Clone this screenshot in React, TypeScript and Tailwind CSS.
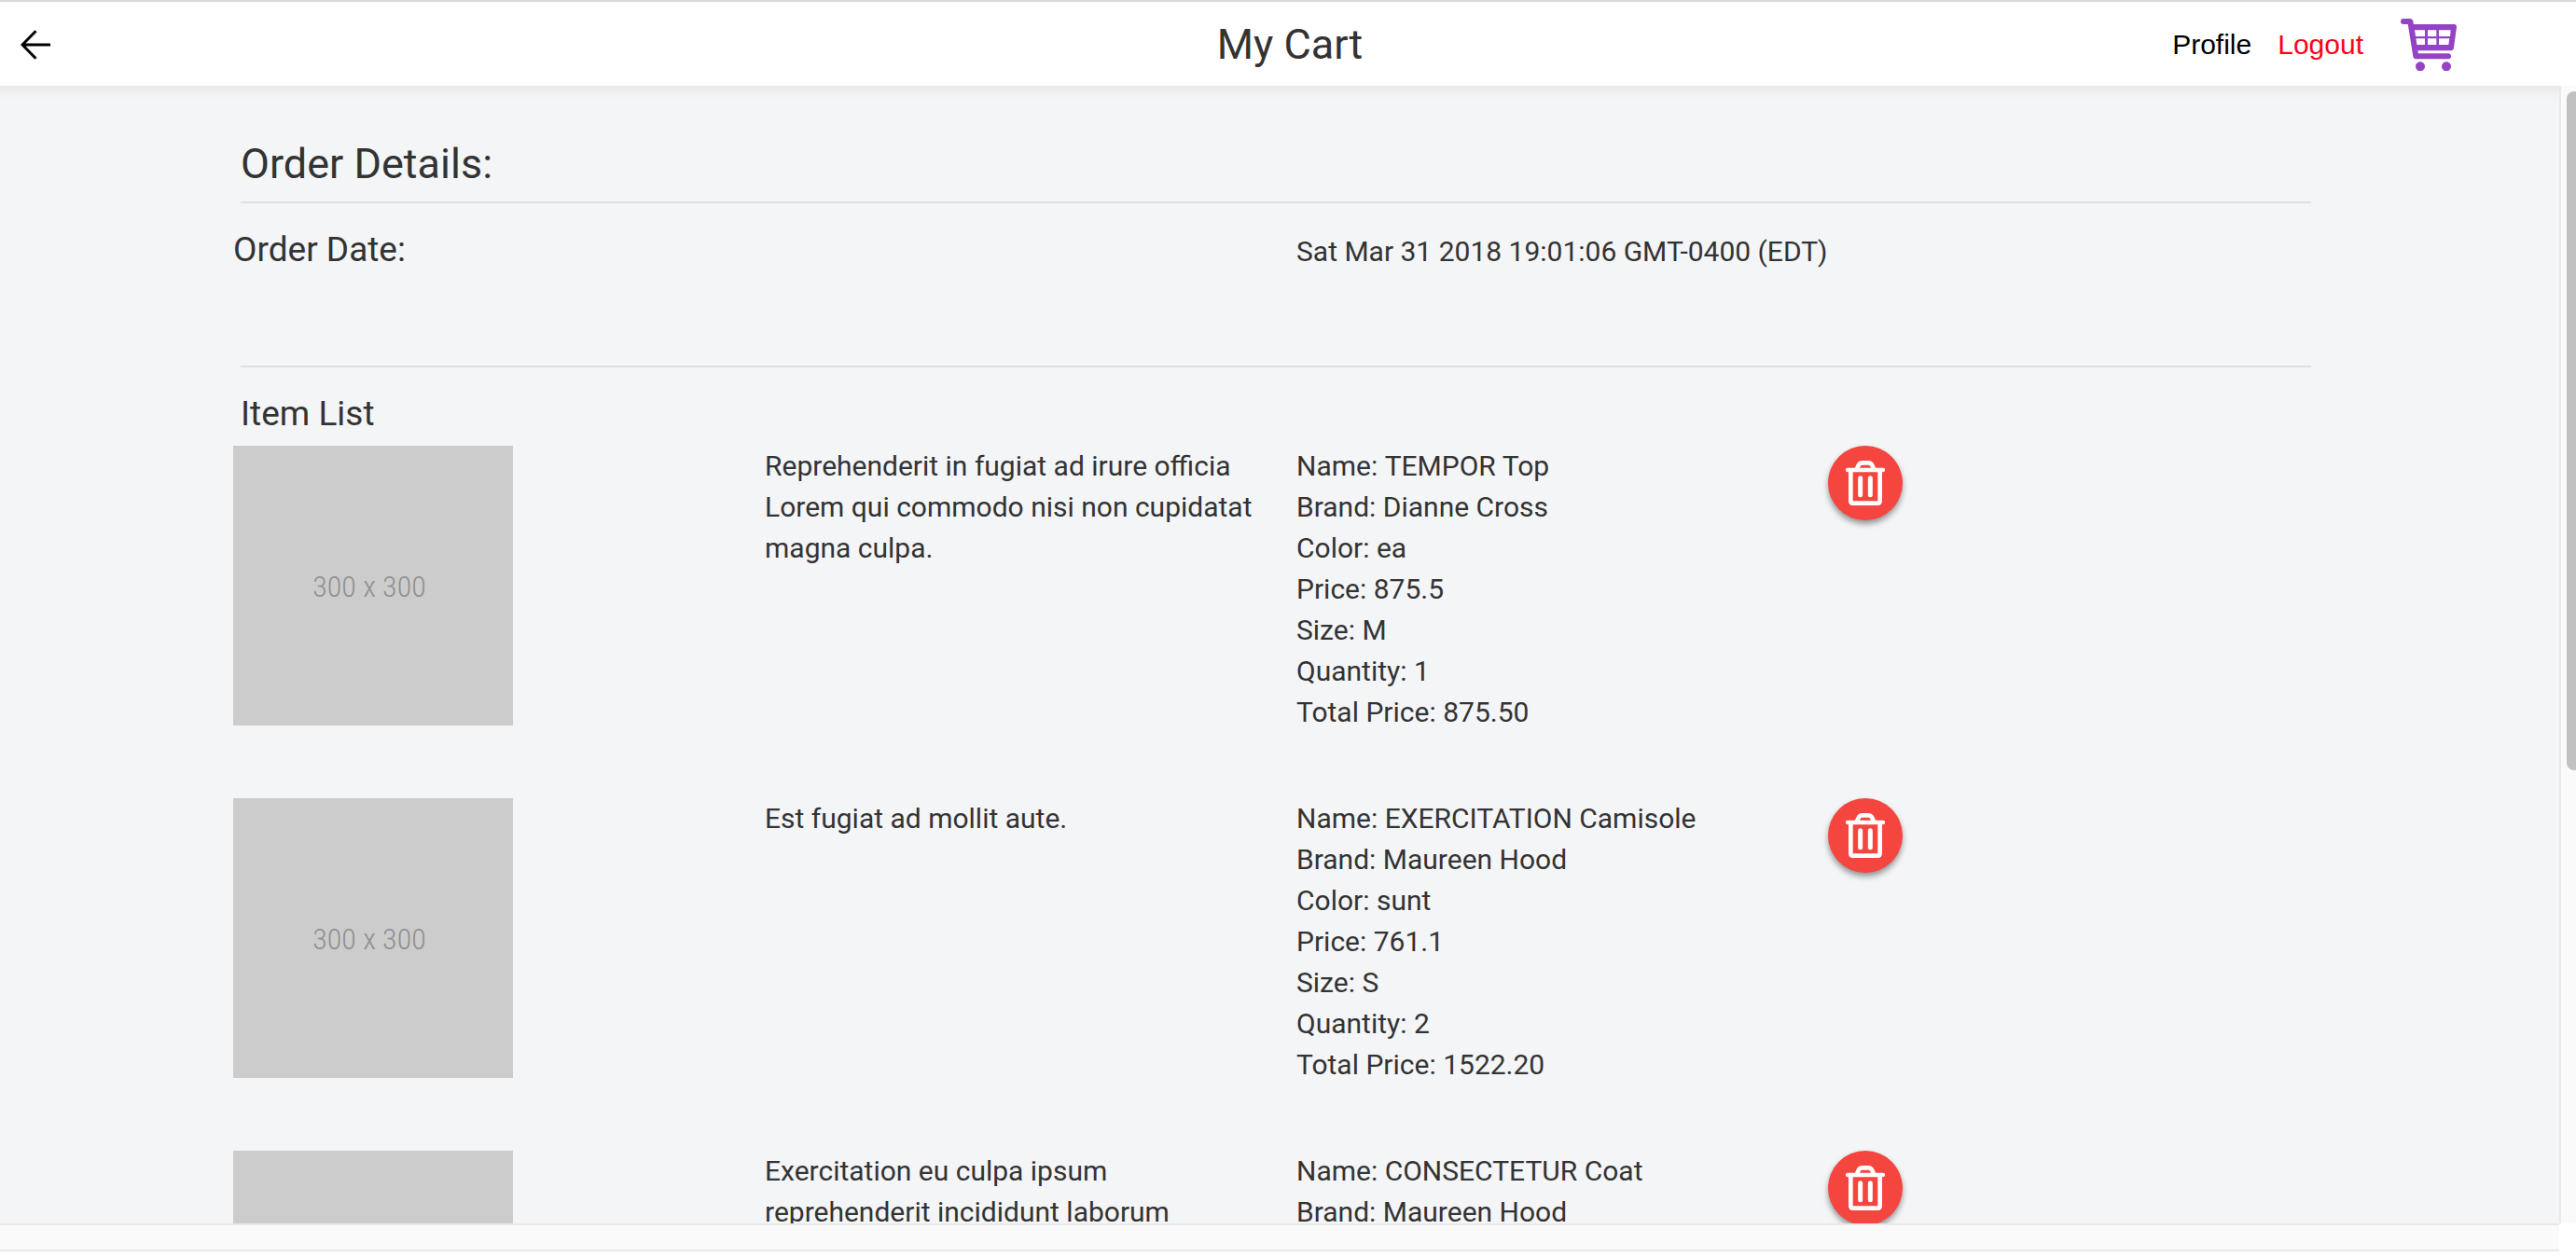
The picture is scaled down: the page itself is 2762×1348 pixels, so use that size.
import React from "react";

type Item = {
  description: string;
  details: [string, string][];
};

const items: Item[] = [
  {
    description:
      "Reprehenderit in fugiat ad irure officia Lorem qui commodo nisi non cupidatat magna culpa.",
    details: [
      ["Name", "TEMPOR Top"],
      ["Brand", "Dianne Cross"],
      ["Color", "ea"],
      ["Price", "875.5"],
      ["Size", "M"],
      ["Quantity", "1"],
      ["Total Price", "875.50"],
    ],
  },
  {
    description: "Est fugiat ad mollit aute.",
    details: [
      ["Name", "EXERCITATION Camisole"],
      ["Brand", "Maureen Hood"],
      ["Color", "sunt"],
      ["Price", "761.1"],
      ["Size", "S"],
      ["Quantity", "2"],
      ["Total Price", "1522.20"],
    ],
  },
  {
    description: "Exercitation eu culpa ipsum reprehenderit incididunt laborum",
    details: [
      ["Name", "CONSECTETUR Coat"],
      ["Brand", "Maureen Hood"],
    ],
  },
];

function BackArrow() {
  return (
    <svg viewBox="0 0 32 32" className="h-8 w-8" fill="none" stroke="black" strokeWidth="3">
      <path d="M16.5 1.2 2 16l14.5 14.8M2 16h30" />
    </svg>
  );
}

function CartIcon() {
  return (
    <svg viewBox="0 0 180 168" className="h-14 w-15">
      <g fill="none" stroke="#9443c4" strokeLinecap="round" strokeLinejoin="round" strokeWidth="18">
        <path d="M9 9h22l18 112h104" />
      </g>
      <path
        fill="#9443c4"
        fillRule="evenodd"
        d="M30 18h142q9 0 8 9l-9 67q-1 9-10 9H42zM45 37l2 20h31V37zM87 37v20h28V37zM123 37v20h36l2-20zM48 64l3 20h27V64zM87 64v20h28V64zM123 64v20h31l3-20z"
      />
      <circle cx="63" cy="154" r="15" fill="#9443c4" />
      <circle cx="147" cy="154" r="15" fill="#9443c4" />
    </svg>
  );
}

function TrashIcon() {
  return (
    <svg viewBox="0 0 128 144" className="h-12 w-11" fill="none" stroke="white" strokeLinecap="round" strokeLinejoin="round">
      <path strokeWidth="13" d="M7 30h114" />
      <path strokeWidth="14" d="M37 26l5-11q4-8 12-8h20q8 0 12 8l5 11" />
      <path strokeWidth="14" d="M17 32v98q0 7 7 7h80q7 0 7-7V32" />
      <path strokeWidth="15" d="M48 56v54M80 56v54" />
    </svg>
  );
}

function ItemRow({ item }: { item: Item }) {
  return (
    <li className="grid grid-cols-4 pb-[70px]">
      <div className="flex h-[300px] w-[300px] items-center justify-center bg-[#cccccc] pt-0.5 pr-2 font-['Liberation_Sans_Narrow','Roboto_Condensed',sans-serif] text-[32px] font-light text-[#8f8f8f]">
        300 x 300
      </div>
      <p className="pr-10">{item.description}</p>
      <dl>
        {item.details.map(([label, value]) => (
          <div key={label}>
            <dt className="inline">{label}:</dt> <dd className="inline">{value}</dd>
          </div>
        ))}
      </dl>
      <button
        type="button"
        aria-label="Remove item"
        className="flex h-20 w-20 items-center justify-center rounded-full bg-[#f4463e] shadow-[0_4px_6px_rgba(0,0,0,0.4)]"
      >
        <TrashIcon />
      </button>
    </li>
  );
}

export default function App() {
  return (
    <div className="flex h-screen flex-col overflow-hidden bg-[#fdfdfd] font-[Roboto,sans-serif] text-[30px] leading-[44px] text-[#333333]">
      <header className="grid h-[92px] shrink-0 grid-cols-3 items-center border-t-2 border-[#d8d8d8] bg-white pt-0.5">
        <button type="button" aria-label="Back" className="ml-[22px] justify-self-start">
          <BackArrow />
        </button>
        <h1 className="pl-1 text-center text-[45px]">My Cart</h1>
        <nav className="mr-32 flex items-center justify-end font-['Liberation_Sans',sans-serif]">
          <a href="#profile" className="mr-7 text-black">Profile</a>
          <a href="#logout" className="mr-10 text-[#ff0017]">Logout</a>
          <a href="#cart" aria-label="Cart"><CartIcon /></a>
        </nav>
      </header>

      <div className="flex min-h-0 flex-1 bg-[#f4f5f7]">
        <main className="min-w-0 flex-1 overflow-hidden bg-linear-to-b from-[#e8eaea] to-[#f4f5f7] to-[14px] pt-14 pr-[214px] pl-[250px]">
          <h2 className="ml-2 text-[45px] leading-[56px]">Order Details:</h2>
          <hr className="mt-3 mr-[52px] ml-2 border-t-2 border-[#dedfe1]" />
          <section className="grid h-[174px] grid-cols-4 pt-[26px]">
            <h3 className="text-[37px] leading-[48px]">Order Date:</h3>
            <p className="col-span-2 col-start-3 pt-1">
              Sat Mar 31 2018 19:01:06 GMT-0400 (EDT)
            </p>
          </section>
          <hr className="mr-[52px] ml-2 border-t-2 border-[#dedfe1]" />
          <h3 className="mt-[26px] mb-2.5 ml-2 text-[37px] leading-[48px]">Item List</h3>
          <ul>
            {items.map((item, i) => (
              <ItemRow key={i} item={item} />
            ))}
          </ul>
        </main>
        <div className="w-[18px] shrink-0 overflow-hidden border-l-2 border-[#e8e8e8] bg-[#fafafa] pt-1.5 pl-1.5">
          <div className="h-[60%] w-4 rounded-full bg-[#c1c1c1]" />
        </div>
      </div>

      <footer className="flex h-9 shrink-0 flex-col bg-white">
        <div className="mr-[18px] h-[30px] border-y-2 border-[#e8e8e8] bg-[#fafafa]" />
      </footer>
    </div>
  );
}
